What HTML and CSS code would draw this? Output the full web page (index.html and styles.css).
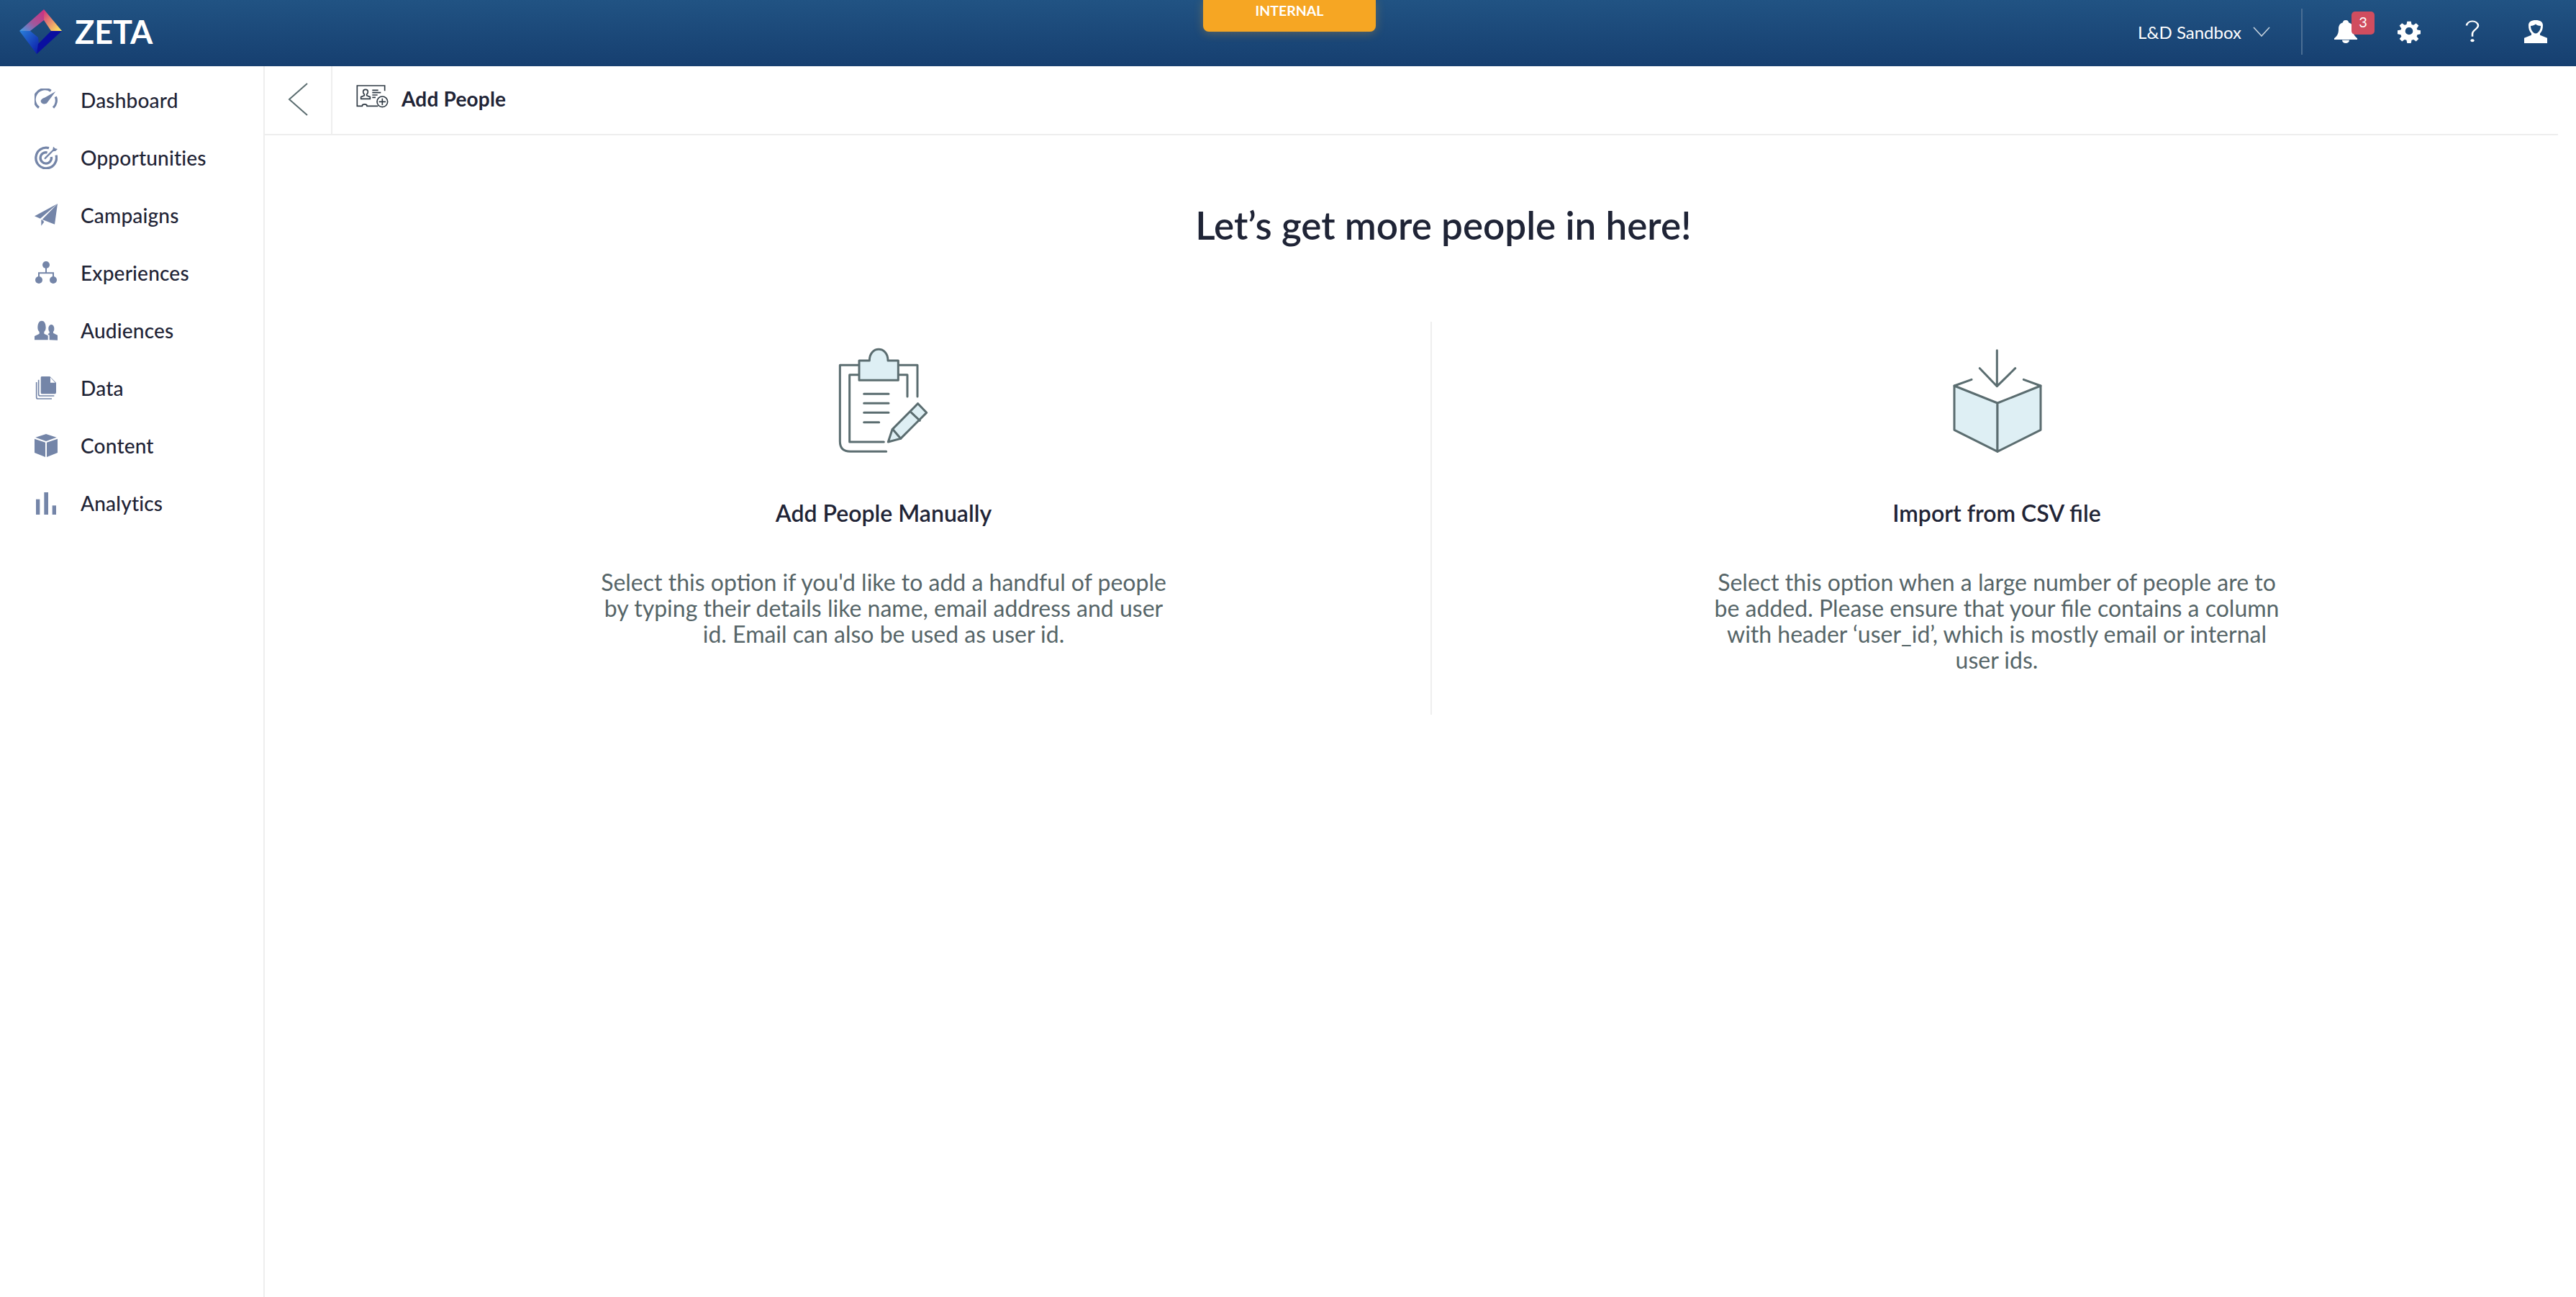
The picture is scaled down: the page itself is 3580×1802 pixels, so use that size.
FILE: index.html
```html
<!DOCTYPE html>
<html lang="en">
<head>
  <meta charset="UTF-8">
  <title>Zeta — Add People</title>
  <link rel="stylesheet" href="styles.css">
</head>
<body>

  <header class="topbar">
    <a href="#" class="logo">
      <svg class="logo-mark" viewBox="0 0 62 66">
        <defs>
          <linearGradient id="lg-a" x1="0" y1="1" x2="1" y2="0">
            <stop offset="0" stop-color="#3f9fe8"/>
            <stop offset=".45" stop-color="#a0589c"/>
            <stop offset="1" stop-color="#cf2f7f"/>
          </linearGradient>
          <linearGradient id="lg-b" x1="0" y1="0" x2="1" y2="1">
            <stop offset="0" stop-color="#cf2f7f"/>
            <stop offset="1" stop-color="#fff35c"/>
          </linearGradient>
          <linearGradient id="lg-c" x1="0" y1="0" x2="1" y2="1">
            <stop offset="0" stop-color="#2a7fd8"/>
            <stop offset="1" stop-color="#0a1aa8"/>
          </linearGradient>
        </defs>
        <polygon points="2,32 36,2 36,17 17,32" fill="url(#lg-a)"/>
        <polygon points="36,2 61,32 46,32 36,17" fill="url(#lg-b)"/>
        <polygon points="2,32 17,32 28,41 29,50 26,64" fill="url(#lg-c)"/>
        <polygon points="61,32 46,32 28,50 26,64" fill="#0a0fa0"/>
      </svg>
      <span class="logo-text">ZETA</span>
    </a>

    <div class="env-tag">INTERNAL</div>

    <div class="topbar-right">
      <a href="#" class="account">
        L&amp;D Sandbox
        <svg class="account-arrow" viewBox="0 0 24 14"><path d="M1 1l11 12L23 1"/></svg>
      </a>
      <span class="topbar-sep"></span>
      <a href="#" class="top-icon bell">
        <svg viewBox="0 0 32 38" preserveAspectRatio="none">
          <path d="M16 0c3 0 4 2 4 4 5 2 6 6 6 11 0 7 2 11 6 15v2H0v-2c4-4 6-8 6-15 0-5 1-9 6-11 0-2 1-4 4-4z"/>
          <path d="M11 33h10c0 3-2 5-5 5s-5-2-5-5z"/>
        </svg>
        <span class="bell-count">3</span>
      </a>
      <a href="#" class="top-icon">
        <svg viewBox="0 0 36 38" preserveAspectRatio="none">
          <path fill-rule="evenodd" d="M13 3h6l1 5 3 1 4-3 4 4-3 5 1 2 5 1v6l-5 1-1 3 3 4-4 4-4-3-3 1-1 5h-6l-1-5-3-1-4 3-4-4 3-4-1-3-5-1v-6l5-1 1-2-3-5 4-4 4 3 3-1zM16 13a6 6 0 1 0 0 12 6 6 0 0 0 0-12z" transform="translate(2 -1)"/>
        </svg>
      </a>
      <a href="#" class="top-icon">
        <svg viewBox="0 0 32 42" preserveAspectRatio="none">
          <path class="help" d="M8 10c0-5 4-8 8-8s8 3 8 8c0 6-8 8-8 15v5"/>
          <circle cx="16" cy="37" r="2.6"/>
        </svg>
      </a>
      <a href="#" class="top-icon">
        <svg viewBox="0 0 32 40" preserveAspectRatio="none">
          <path fill-rule="evenodd" d="M16 0c6 0 10 3 10 9 0 6-1 10-4 14v3l10 5v9H0v-9l10-5v-3C7 19 6 15 6 9c0-6 4-9 10-9zM9 10c0 6 3 13 7 13s7-7 7-13c-3 0-6-1-7-3-2 2-4 3-7 3z"/>
        </svg>
      </a>
    </div>
  </header>

  <div class="page">
    <aside class="sidebar">
      <nav>
        <ul>
          <li><a href="#">
            <svg class="nav-icon" viewBox="0 0 96 96">
              <path class="arc" d="M18 80A43 43 0 0 1 68 10"/>
              <path class="arc" d="M88 34A43 43 0 0 1 78 80"/>
              <path d="M88 12L52 60c-6 7-24 6-26-6-1-8 8-14 16-16z"/>
            </svg>
            Dashboard</a></li>
          <li><a href="#">
            <svg class="nav-icon" viewBox="0 0 96 96">
              <path class="arc" d="M60 8A43 43 0 1 0 90 38"/>
              <path class="arc" d="M53 27A23 23 0 1 0 70 45"/>
              <path d="M44 46L76 14l2-12 8 8 10 2-8 8-10 2-32 32c-5 3-8-3-2-8z"/>
            </svg>
            Opportunities</a></li>
          <li><a href="#">
            <svg class="nav-icon" viewBox="0 0 96 96">
              <polygon points="96,0 0,52 24,62"/>
              <polygon points="96,0 32,66 84,86"/>
              <polygon points="28,66 34,70 40,76 28,92"/>
            </svg>
            Campaigns</a></li>
          <li><a href="#">
            <svg class="nav-icon" viewBox="0 0 96 96">
              <circle cx="48" cy="15" r="15"/>
              <circle cx="18" cy="78" r="15"/>
              <circle cx="78" cy="78" r="15"/>
              <path class="link" d="M48 28v21M18 66V49h60v17"/>
            </svg>
            Experiences</a></li>
          <li><a href="#">
            <svg class="nav-icon" viewBox="0 0 96 80">
              <path d="M0 80V64l20-10v-8c-5-4-7-10-7-18C13 10 20 0 30 0s17 10 17 28c0 8-2 14-7 18v8l16 8v18z"/>
              <path d="M62 80V60l-6-3v-2l6-4v-6c-3-3-4-7-4-12 0-10 5-17 12-17s12 7 12 17c0 5-1 9-4 12v6l20 10v20z"/>
            </svg>
            Audiences</a></li>
          <li><a href="#">
            <svg class="nav-icon" viewBox="0 0 96 96">
              <path d="M26 5c0-3 2-5 5-5h33l26 26v40c0 4-3 7-6 7H31c-3 0-5-3-5-5z"/>
              <path class="page-fold" d="M66 4l20 22H66z"/>
              <path class="doc-edge" d="M17 14v60c0 4 2 7 7 7h58"/>
              <path class="doc-edge" d="M8 24v62c0 4 2 7 6 7h58"/>
            </svg>
            Data</a></li>
          <li><a href="#">
            <svg class="nav-icon" viewBox="0 0 96 96">
              <polygon points="48,0 92,14 48,30 4,14"/>
              <polygon points="0,20 45,35 45,96 0,78"/>
              <polygon points="96,20 51,35 51,96 96,78"/>
            </svg>
            Content</a></li>
          <li><a href="#">
            <svg class="nav-icon" viewBox="0 0 96 96">
              <rect x="6" y="32" width="16" height="64"/>
              <rect x="40" y="3" width="17" height="93"/>
              <rect x="74" y="58" width="16" height="38"/>
            </svg>
            Analytics</a></li>
        </ul>
      </nav>
    </aside>

    <main class="content">
      <div class="subbar">
        <a href="#" class="back">
          <svg viewBox="0 0 28 46"><path d="M27 1L2 23l25 22"/></svg>
        </a>
        <div class="subbar-title">
          <svg class="subbar-icon" viewBox="0 0 136 96">
            <path d="M90 88H44c0-10-20-10-20 0H3V3h115v22"/>
            <path d="M19 58V50l14-6v-5c-4-3-5-6-5-10 0-6 4-10 10-10s10 4 10 10c0 4-1 7-5 10v5l14 6v8z"/>
            <path d="M66 22h25M66 32h36M66 42h22M66 52h14"/>
            <circle cx="108" cy="70" r="22"/>
            <path d="M108 56v28M94 70h28"/>
          </svg>
          Add People
        </div>
      </div>

      <div class="add-wrap">
        <h1>Let’s get more people in here!</h1>
        <div class="options">
          <section class="option option-manual">
            <svg class="option-icon" viewBox="0 0 570 510">
              <path d="M435 243V112H355M192 112H112V430Q112 472 155 472H305"/>
              <path d="M393 243V152H355M192 152H152V432H295"/>
              <path class="tint" d="M192 175V93H235C235 30 312 30 312 93H355V175Z"/>
              <path d="M212 232H315M212 271H315M212 310H315M212 350H275"/>
              <path class="tint" d="M437 272L473 310L365 418L313 432L330 380Z"/>
              <path d="M410 310L445 343M333 380L365 418"/>
            </svg>
            <h3>Add People Manually</h3>
            <p>Select this option if you'd like to add a handful of people by typing their details like name, email address and user id. Email can also be used as user id.</p>
          </section>
          <section class="option option-csv">
            <svg class="option-icon" viewBox="0 0 570 510">
              <path d="M286 50V200M214 125L286 200L362 125"/>
              <path class="tint" d="M108 198L288 270V472L108 382Z"/>
              <path class="tint" d="M288 270L468 198V382L288 472Z"/>
              <path d="M108 198L180 172M468 198L397 172"/>
            </svg>
            <h3>Import from CSV file</h3>
            <p>Select this option when a large number of people are to be added. Please ensure that your file contains a column with header ‘user_id’, which is mostly email or internal user ids.</p>
          </section>
        </div>
      </div>
    </main>
  </div>

</body>
</html>
```

FILE: styles.css
```css
:root {
  --ink: #1f2436;
  --muted: #566568;
  --icon: #7485a8;
  --line: #eeeeee;
  --stroke: #5b6d70;
  --tint: #deeff4;
}
* { box-sizing: border-box; margin: 0; padding: 0; }
body {
  height: 100vh;
  overflow: hidden;
  background: #fff;
  color: var(--ink);
  font-family: Lato, "Open Sans", sans-serif;
}
a { color: inherit; text-decoration: none; }
ul { list-style: none; }

.topbar {
  position: relative;
  display: flex;
  align-items: center;
  justify-content: space-between;
  height: 92px;
  padding: 0 40px 4px 25px;
  background: linear-gradient(#215383, #163f70);
  color: #fff;
}
.logo { display: flex; align-items: center; gap: 17px; }
.logo-mark { width: 62px; height: 66px; }
.logo-text { font-size: 45px; font-weight: 700; line-height: 1; }
.env-tag {
  position: absolute;
  top: 0;
  left: 1672px;
  width: 240px;
  height: 44px;
  padding-top: 4px;
  background: #f6a623;
  border-radius: 0 0 8px 8px;
  box-shadow: 0 2px 14px rgba(246,166,35,.3);
  font-size: 19.5px;
  font-weight: 700;
  line-height: 22px;
  text-align: center;
}

.topbar-right { display: flex; align-items: center; }
.account { display: flex; align-items: center; gap: 16px; font-size: 24px; }
.account-arrow { width: 24px; height: 14px; fill: none; stroke: #c6d2de; stroke-width: 1.6; }
.topbar-sep { width: 2px; height: 64px; margin: 0 44px 0 43px; background: #4a6e94; }
.top-icon { position: relative; display: block; width: 32px; margin-right: 56px; }
.top-icon:last-child { margin-right: 0; }
.top-icon svg { display: block; width: 32px; height: 32px; fill: #fff; }
.help { fill: none; stroke: #fff; stroke-width: 2.6; }
.bell-count {
  position: absolute;
  top: -12px;
  left: 24px;
  width: 32px;
  height: 32px;
  background: #d04d5f;
  border-radius: 5px;
  font-size: 20px;
  line-height: 28px;
  text-align: center;
}

.page { display: flex; height: calc(100vh - 92px); }
.sidebar {
  flex: 0 0 368px;
  padding-top: 7px;
  border-right: 2px solid var(--line);
}
.sidebar a {
  display: flex;
  align-items: center;
  gap: 32px;
  height: 80px;
  padding-left: 48px;
  font-size: 28px;
  font-weight: 500;
  letter-spacing: .2px;
}
.nav-icon { flex-shrink: 0; width: 32px; height: 32px; fill: var(--icon); }
.arc { fill: none; stroke: var(--icon); stroke-width: 10; }
.link { fill: none; stroke: var(--icon); stroke-width: 6; }
.page-fold { fill: #fff; }
.doc-edge { fill: none; stroke: var(--icon); stroke-width: 5; }

.content { flex: 1; min-width: 0; }
.subbar {
  display: flex;
  height: 96px;
  margin-right: 25px;
  border-bottom: 2px solid var(--line);
}
.back {
  display: flex;
  align-items: center;
  justify-content: center;
  width: 94px;
  padding-bottom: 2px;
  border-right: 2px solid var(--line);
}
.back svg { width: 28px; height: 46px; fill: none; stroke: var(--stroke); stroke-width: 2; }
.subbar-title {
  display: flex;
  align-items: center;
  gap: 17px;
  padding: 0 0 4px 33px;
  font-size: 28px;
  font-weight: 700;
  letter-spacing: .2px;
}
.subbar-icon { width: 46px; height: 32px; margin-bottom: 6px; fill: none; stroke: #2f3a44; stroke-width: 5; }

.add-wrap { padding: 95px 36px 0 100px; }
h1 {
  font-size: 53px;
  font-weight: 600;
  line-height: 60px;
  text-align: center;
}
.options {
  display: grid;
  grid-template-columns: 1520px 1fr;
  margin-top: 104px;
}
.option {
  display: flex;
  flex-direction: column;
  align-items: center;
  height: 546px;
  padding-top: 23px;
}
.option-manual .option-icon { margin-right: 6px; }
.option-csv {
  padding-left: 16px;
  border-left: 2px solid var(--line);
}
.option-icon {
  width: 190px;
  height: 170px;
  fill: none;
  stroke: var(--stroke);
  stroke-width: 9;
  stroke-linecap: round;
  stroke-linejoin: round;
}
.tint { fill: var(--tint); }
h3 {
  margin-top: 53px;
  font-size: 32px;
  font-weight: 600;
  line-height: 40px;
}
.option p {
  width: 800px;
  margin-top: 58px;
  color: var(--muted);
  font-size: 32px;
  line-height: 36px;
  text-align: center;
}
```
